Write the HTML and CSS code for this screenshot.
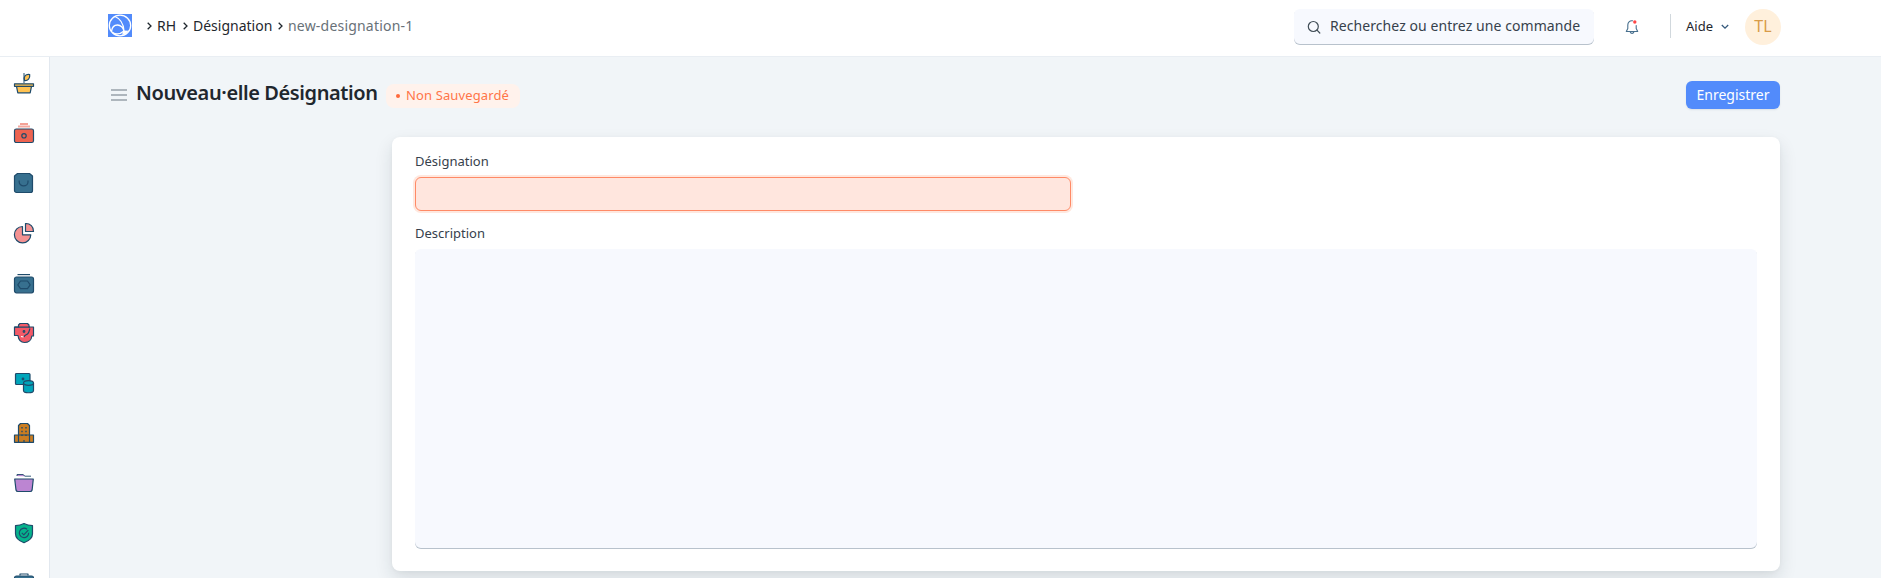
FILE: index.html
```html
<!DOCTYPE html>
<html lang="fr">
<head>
<meta charset="utf-8">
<title>Nouveau·elle Désignation</title>
<link rel="stylesheet" href="styles.css">
</head>
<body>
<header class="navbar">
  <svg class="logo" width="24" height="23" viewBox="0 0 24 23"><path fill="#528bfb" d="M0 0h24v23H0z"/><g fill="none" stroke="#fff" stroke-width="1.3"><ellipse cx="12" cy="11.5" rx="10.700" ry="10.300"/><path d="M7 2.500c5 2 8.500 7.500 9 14.500M3.500 17.500C4 13 6.500 11 9.500 11s6 2.500 6.500 6.500M4.500 18.500c3.500 2.200 8 1.500 11.500-1.500"/></g><path fill="#fff" d="M15.500 16.500l5 .3-2.500 3-4 1z"/></svg>
  <nav class="crumbs">
    <svg class="chev" width="5" height="8" viewBox="0 0 5 8"><path d="M.7.7 4 4 .7 7.300"/></svg>
    <span class="c-rh">RH</span>
    <svg class="chev" width="5" height="8" viewBox="0 0 5 8"><path d="M.7.7 4 4 .7 7.300"/></svg>
    <span class="c-des">Désignation</span>
    <svg class="chev" width="5" height="8" viewBox="0 0 5 8"><path d="M.7.7 4 4 .7 7.300"/></svg>
    <span class="c-new">new-designation-1</span>
  </nav>
  <div class="search">
    <svg width="14" height="14" viewBox="0 0 14 14" fill="none" stroke="#404d56" stroke-width="1.200" stroke-linecap="round"><circle cx="6.300" cy="6.500" r="5"/><path d="m10 10.200 2.800 2.800"/></svg>
    <span class="search-text">Recherchez ou entrez une commande</span>
  </div>
  <svg class="bell" width="14" height="16" viewBox="0 0 14 16" fill="none" stroke="#48708e" stroke-width="1.100" stroke-linecap="round" stroke-linejoin="round"><path d="M7.500 1.800C4.600 1.400 2.800 3.500 2.800 6v3.500L1.300 12.500h11.400l-1.500-3V6.500M5.300 13a1.800 1.800 0 0 0 3.500 0"/><circle cx="9.800" cy="3" r="1.700" fill="#ff4646" stroke="none"/></svg>
  <span class="divider"></span>
  <span class="help">Aide</span>
  <svg class="down" width="8" height="6" viewBox="0 0 8 6"><path d="m.8 1 3.200 3.200L7.200 1"/></svg>
  <span class="avatar">TL</span>
</header>
<div class="body">
  <aside class="sidebar">
    <svg class="ic" viewBox="0 0 22 22"><path d="M11 11V1" stroke-width="1"/><path fill="#ffc252" d="M11.500 8.500c-1-4 1-6.700 5.200-6 .5 4-1.700 6.300-5.200 6zM3.500 14.300h15l-1.300 6.500H4.800zM1.500 11.800h19v2.500h-19z"/></svg>
    <svg class="ic" viewBox="0 0 22 22"><path stroke="#ed6350" d="M7 2h8"/><path stroke="#f5a99f" stroke-width="2" d="M5 4.500h12"/><rect fill="#ed6350" x="1.500" y="7" width="19" height="13.500" rx="1.800"/><circle cx="11" cy="13.800" r="2.200"/></svg>
    <svg class="ic" viewBox="0 0 22 22"><path fill="#37708f" d="M4.500 1.500h12l3 2.500v14.500a2 2 0 0 1-2 2h-14a2 2 0 0 1-2-2V4z"/><path d="M6.200 8.500V10a4.300 3.800 0 0 0 8.800 0V8.500"/></svg>
    <svg class="ic" viewBox="0 0 22 22"><path fill="#f49292" d="M9.500 4.500v8.300h8.300A8.200 8.200 0 1 1 9.500 4.500zM12.500 1.500a7.500 7.500 0 0 1 8 8h-8z"/></svg>
    <svg class="ic" viewBox="0 0 22 22"><path d="M4.500 2.600h12.500"/><rect fill="#37708f" x="1.500" y="5" width="19" height="15.800" rx="2"/><path d="M7.500 9h7l2.700 3.800-2.700 3.800h-7l-2.700-3.800z"/></svg>
    <svg class="ic" viewBox="0 0 22 22"><path fill="#f35a68" d="M5.500 5V3L7 1.500h7.500L16 3v2h4.500v9h-1.700c-.3 4-3.300 6.500-7.300 6.500-3.500 0-6-3-6.500-7H1.500V5z"/><path d="M1.500 5.200h15.500M17 6.500c-1 2-.5 4-2.500 5.500s-3 1-3.500 3"/><circle cx="11" cy="9.500" r=".8"/><path stroke="#fff" d="m8 14.500 2.500.5"/></svg>
    <svg class="ic" viewBox="0 0 22 22"><rect fill="#00a5ba" x="2.500" y="1.500" width="14.500" height="11" rx="1"/><circle cx="10" cy="7" r=".8"/><path fill="#00a5ba" d="M10.500 11v7.500c0 3 10 3 10 0V11"/><ellipse fill="#00a5ba" cx="15.500" cy="11" rx="5" ry="2.300"/></svg>
    <svg class="ic" viewBox="0 0 22 22"><path fill="#cb7d21" d="M1.500 13h19v7.300h-19zM5.500 20.300V3.500L7.500 1.500h7l2 2v16.800z"/><path stroke-width="1.400" stroke-dasharray="1.400 2.400" d="M9 5v11M13 5v11"/><path d="M11 18v2.500"/></svg>
    <svg class="ic" viewBox="0 0 22 22"><path fill="#bc85d2" stroke-width=".9" d="M4 4V2.500h6l2 1.700h6"/><path fill="#bc85d2" d="M1.700 7h18.600l-1.200 11a2 2 0 0 1-2 1.500H5a2 2 0 0 1-2-1.500z"/></svg>
    <svg class="ic" viewBox="0 0 22 22"><path fill="#05b38c" d="M11 1.500C8 3 5 3.500 2.500 3.700v8c0 4.500 4 7.300 8.500 9 4.500-1.700 8.500-4.500 8.500-9v-8C17 3.500 14 3 11 1.500z"/><path d="M14 7.300a4.700 4.700 0 1 0 1.700 3.400M8.800 10.800l2 2 4.500-4.700"/></svg>
    <svg class="ic" viewBox="0 0 22 22"><path d="M7 3.500V2h8v1.500"/><rect fill="#37708f" x="1.500" y="4" width="19" height="15" rx="2"/></svg>
  </aside>
  <main class="page">
    <div class="page-head">
      <svg class="menu" width="16" height="12" viewBox="0 0 16 12"><path stroke="#98a1a9" stroke-width="1.700" d="M0 1h16M0 6h16M0 11h16"/></svg>
      <h1 class="title">Nouveau·elle Désignation</h1>
      <span class="badge"><i class="dot"></i><span class="badge-text">Non Sauvegardé</span></span>
      <button class="save"><span class="save-text">Enregistrer</span></button>
    </div>
    <section class="card">
      <label class="label l-des">Désignation</label>
      <div class="input"></div>
      <label class="label l-desc">Description</label>
      <div class="textarea"></div>
    </section>
  </main>
</div>
</body>
</html>
```
FILE: styles.css
```css
* { box-sizing: border-box; }
body { margin: 0; height: 578px; overflow: hidden; background: #f1f5f8; color: #1f272e; font-family: "Noto Sans", sans-serif; font-size: 13px; }
svg { display: block; flex: none; }
span, h1, label { white-space: nowrap; }
.navbar { height: 57px; padding: 0 100px 3px 108px; display: flex; align-items: center; background: #fff; border-bottom: 1px solid #e9eef3; }
.logo { margin-top: -3px; }
.crumbs { display: flex; align-items: center; margin: -1px 0 0 15px; font-size: 14px; line-height: 18px; }
.chev path { fill: none; stroke: #1f272e; stroke-width: 1.3; }
.c-rh { width: 20px; margin: 0 6px 0 5px; }
.c-des { width: 80px; margin: 0 5px 0 5px; }
.c-new { margin-left: 5px; color: #687178; letter-spacing: .2px; }
.search { width: 300px; height: 36px; margin-left: auto; padding-left: 13px; display: flex; align-items: center; background: #f7f9fe; border-radius: 6px; box-shadow: inset 0 -1px #b8c2cc; font-size: 14px; }
.search-text { margin: -1px 0 0 9px; line-height: 18px; color: #36414c; letter-spacing: .07px; }
.bell { margin-left: 31px; }
.divider { width: 1px; height: 24px; margin-left: 31px; margin-top: -1px; background: #d1d8dd; }
.help { width: 28px; margin: -1px 0 0 15px; }
.down { margin-left: 7px; }
.down path { fill: none; stroke: #35597c; stroke-width: 1.3; }
.avatar { width: 36px; height: 36px; margin-left: 16px; border-radius: 50%; background: #fff0dc; color: #d89b48; font-size: 16px; line-height: 35px; text-align: center; }
.body { display: flex; height: 521px; }
.sidebar { width: 50px; flex: none; padding: 15px 0 0 13px; display: flex; flex-direction: column; gap: 28px; background: #fff; border-right: 1px solid #e2e8ef; }
.ic { width: 22px; height: 22px; fill: none; stroke: #1f4b6b; stroke-width: 1.2; stroke-linejoin: round; }
.page { flex: 1; padding: 24px 101px 0 61px; }
.page-head { height: 28px; display: flex; align-items: center; }
.title { width: 241px; margin: -5px 0 0 9px; font-size: 20px; line-height: 24px; font-weight: 600; letter-spacing: -.4px; }
.badge { height: 24px; width: 134px; margin: 2px 0 0 9px; padding-left: 10px; display: flex; align-items: center; border-radius: 8px; background: #fff2ec; color: #ff7548; }
.badge-text { margin-top: -3px; letter-spacing: .12px; }
.dot { width: 4px; height: 4px; margin-right: 6px; border-radius: 50%; background: #ff6a3c; }
.save { width: 94px; height: 28px; margin-left: auto; padding: 0; border: 0; border-radius: 6px; background: #528bfb; color: #fff; font: 14px/20px "Noto Sans", sans-serif; box-shadow: 0 1px 2px rgba(30, 50, 80, .1); }
.card { height: 434px; margin: 28px 0 0 281px; padding: 14px 23px 0; background: #fff; border-radius: 8px; box-shadow: 0 8px 18px rgba(25, 39, 52, .12), 0 1px 4px rgba(25, 39, 52, .04); }
.label { display: block; height: 20px; line-height: 20px; color: #36414c; }
.input { width: 656px; height: 34px; margin-top: 6px; border: 1px solid #ff8a66; border-radius: 6px; background: #ffe6de; box-shadow: 0 0 0 2px #ffe8df; }
.l-desc { margin-top: 12px; }
.textarea { height: 300px; margin-top: 6px; border-radius: 6px; background: #f7f9fe; box-shadow: inset 0 -1px #b8c2cc; }
```
